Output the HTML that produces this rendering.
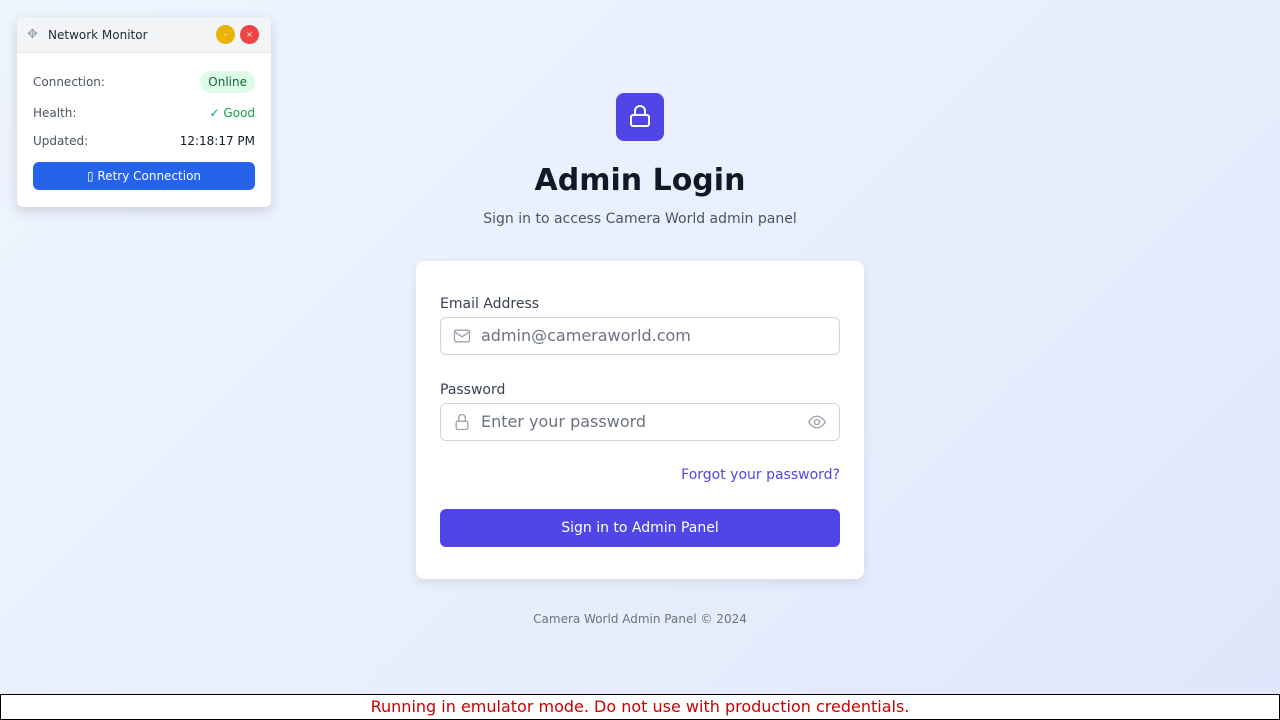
<!DOCTYPE html>
<html><head><meta charset="utf-8"><style>
*{box-sizing:border-box;margin:0;padding:0}
body{width:1280px;height:720px;overflow:hidden;font-family:"DejaVu Sans",sans-serif;background:linear-gradient(135deg,#eff5ff 0%,#e8effd 50%,#e0e6fb 100%);position:relative}
.nm{position:absolute;left:17px;top:17px;width:254px;height:190px;background:#fff;border-radius:6px;box-shadow:0 4px 12px rgba(0,0,0,.15);overflow:hidden}
.nmh{height:36px;background:#f3f4f6;border-bottom:1px solid #e5e7eb;display:flex;align-items:center;padding-left:31px;font-size:12px;color:#1f2937;position:relative}
.dot{position:absolute;top:8px;width:19px;height:19px;border-radius:50%;color:#fff;font-size:8px;text-align:center;line-height:19px}
.row{position:absolute;left:16px;right:16px;display:flex;justify-content:space-between;align-items:center;font-size:12px;color:#4b5563}
.btn{position:absolute;left:16px;right:16px;top:145px;height:28px;background:#2563eb;border-radius:6px;color:#fff;font-size:12px;text-align:center;line-height:28px}
.abs{position:absolute}
.card{position:absolute;left:416px;top:261px;width:448px;height:318px;background:#fff;border-radius:8px;box-shadow:0 4px 10px rgba(0,0,0,.08)}
.inp{position:absolute;left:24px;width:400px;height:38px;border:1px solid #d1d5db;border-radius:6px;font-size:16px;color:#6b7280;padding-left:40px;line-height:36px}
.lbl{position:absolute;left:24px;font-size:14px;color:#374151}
</style></head><body>
<div class="nm">
 <div class="nmh"><span style="position:absolute;left:10px;top:10px;color:#9ca3af;font-size:13px">✥</span>Network Monitor
  <div class="dot" style="left:199px;background:#eab308">–</div>
  <div class="dot" style="left:223px;background:#ef4444">×</div></div>
 <div class="row" style="top:53px;height:24px">Connection:<span style="background:#dcfce7;color:#166534;border-radius:12px;padding:4px 8px">Online</span></div>
 <div class="row" style="top:89px">Health:<span style="color:#16a34a">✓ Good</span></div>
 <div class="row" style="top:117px">Updated:<span style="color:#111827">12:18:17 PM</span></div>
 <div class="btn">▯ Retry Connection</div>
</div>
<div class="abs" style="left:616px;top:93px;width:48px;height:48px;background:#4f46e5;border-radius:8px">
<svg width="48" height="48" viewBox="0 0 48 48" fill="none" stroke="#fff" stroke-width="2"><rect x="15" y="22" width="18" height="11" rx="2"/><path d="M19 22v-4a5 5 0 0 1 10 0v4"/></svg></div>
<div class="abs" style="left:0;width:1280px;top:163px;text-align:center;font-size:30px;font-weight:bold;color:#111827">Admin Login</div>
<div class="abs" style="left:0;width:1280px;top:211px;text-align:center;font-size:14px;color:#4b5563">Sign in to access Camera World admin panel</div>
<div class="card">
 <div class="lbl" style="top:35px">Email Address</div>
 <div class="inp" style="top:56px">admin@cameraworld.com
  <svg class="abs" style="left:11px;top:8px" width="20" height="20" viewBox="0 0 24 24" fill="none" stroke="#9ca3af" stroke-width="1.6"><rect x="3" y="5" width="18" height="14" rx="2"/><path d="M3 7l9 6 9-6"/></svg></div>
 <div class="lbl" style="top:121px">Password</div>
 <div class="inp" style="top:142px">Enter your password
  <svg class="abs" style="left:11px;top:8px" width="20" height="20" viewBox="0 0 24 24" fill="none" stroke="#9ca3af" stroke-width="1.6"><rect x="5" y="11" width="14" height="10" rx="2"/><path d="M8 11V7a4 4 0 0 1 8 0v4"/></svg>
  <svg class="abs" style="left:366px;top:8px" width="20" height="20" viewBox="0 0 24 24" fill="none" stroke="#9ca3af" stroke-width="1.6"><path d="M2 12s4-7 10-7 10 7 10 7-4 7-10 7S2 12 2 12z"/><circle cx="12" cy="12" r="3"/></svg></div>
 <div class="abs" style="right:24px;top:206px;font-size:14px;color:#4f46e5">Forgot your password?</div>
 <div class="abs" style="left:24px;top:248px;width:400px;height:38px;background:#4f46e5;border-radius:6px;color:#fff;font-size:14px;text-align:center;line-height:38px">Sign in to Admin Panel</div>
</div>
<div class="abs" style="left:0;width:1280px;top:612px;text-align:center;font-size:12px;color:#6b7280">Camera World Admin Panel © 2024</div>
<div class="abs" style="left:0;top:694px;width:1280px;height:26px;background:#fff;border:1px solid #000;text-align:center;font-size:16px;color:#c00;line-height:24px">Running in emulator mode. Do not use with production credentials.</div>
</body></html>
